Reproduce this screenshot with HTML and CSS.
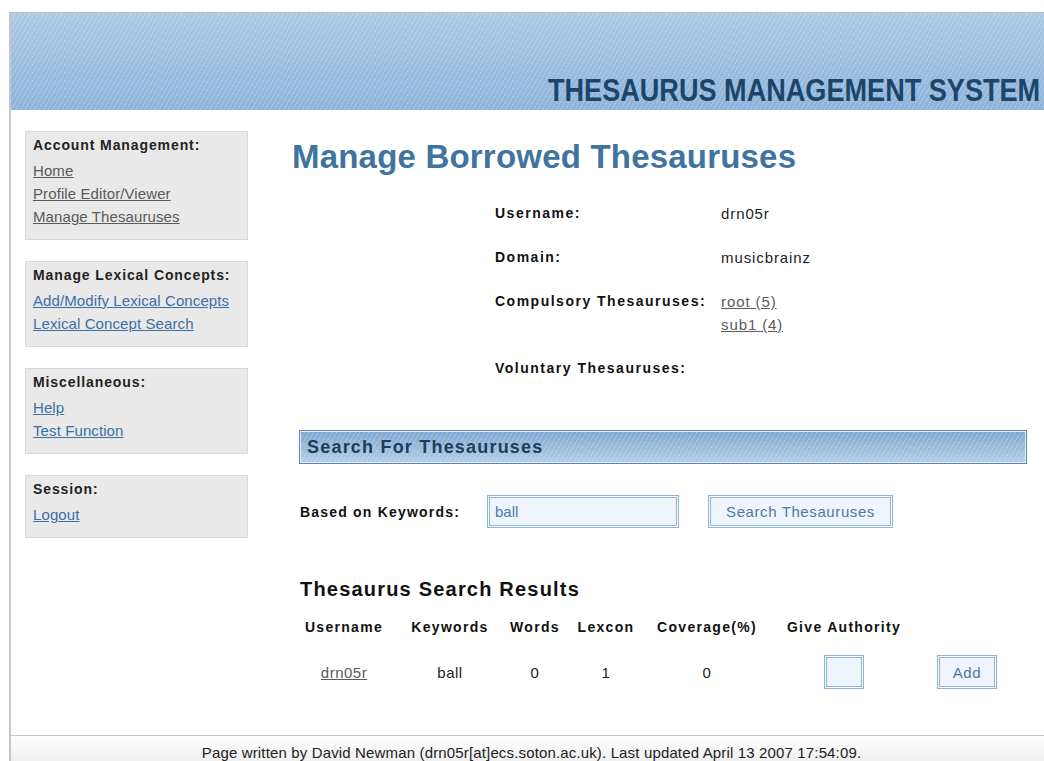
FILE: index.html
```html
<!DOCTYPE html>
<html lang="en">
<head>
<meta charset="utf-8">
<title>Manage Borrowed Thesauruses - Thesaurus Management System</title>
<link rel="stylesheet" href="styles.css">
</head>
<body>
<div class="page">
  <header class="banner">
    <span class="brand">THESAURUS MANAGEMENT SYSTEM</span>
  </header>

  <div class="layout">
    <nav class="sidebar">
      <div class="navbox">
        <h3>Account Management:</h3>
        <ul>
          <li><a href="#" class="seen">Home</a></li>
          <li><a href="#" class="seen">Profile Editor/Viewer</a></li>
          <li><a href="#" class="seen">Manage Thesauruses</a></li>
        </ul>
      </div>
      <div class="navbox">
        <h3>Manage Lexical Concepts:</h3>
        <ul>
          <li><a href="#">Add/Modify Lexical Concepts</a></li>
          <li><a href="#">Lexical Concept Search</a></li>
        </ul>
      </div>
      <div class="navbox">
        <h3>Miscellaneous:</h3>
        <ul>
          <li><a href="#">Help</a></li>
          <li><a href="#">Test Function</a></li>
        </ul>
      </div>
      <div class="navbox">
        <h3>Session:</h3>
        <ul>
          <li><a href="#">Logout</a></li>
        </ul>
      </div>
    </nav>

    <main class="content">
      <h1 class="page-title">Manage Borrowed Thesauruses</h1>

      <dl class="profile">
        <dt>Username:</dt>
        <dd>drn05r</dd>
        <dt>Domain:</dt>
        <dd>musicbrainz</dd>
        <dt>Compulsory Thesauruses:</dt>
        <dd>
          <a href="#" class="seen">root (5)</a><br>
          <a href="#" class="seen">sub1 (4)</a>
        </dd>
        <dt>Voluntary Thesauruses:</dt>
        <dd></dd>
      </dl>

      <h2 class="section-bar">Search For Thesauruses</h2>

      <form class="search-row">
        <label class="search-label" for="kw">Based on Keywords:</label>
        <input id="kw" class="field keyword-field" type="text" value="ball">
        <button type="button" class="btn search-btn">Search Thesauruses</button>
      </form>

      <h2 class="results-title">Thesaurus Search Results</h2>

      <div class="results">
        <div class="th">Username</div>
        <div class="th">Keywords</div>
        <div class="th">Words</div>
        <div class="th">Lexcon</div>
        <div class="th">Coverage(%)</div>
        <div class="th">Give Authority</div>
        <div class="th"></div>

        <div class="td"><a href="#" class="seen">drn05r</a></div>
        <div class="td">ball</div>
        <div class="td">0</div>
        <div class="td">1</div>
        <div class="td">0</div>
        <div class="td"><input class="field authority-field" type="text"></div>
        <div class="td"><button type="button" class="btn add-btn">Add</button></div>
      </div>
    </main>
  </div>

  <footer class="footer">
    Page written by David Newman (drn05r[at]ecs.soton.ac.uk). Last updated April 13 2007 17:54:09.
  </footer>
</div>
</body>
</html>
```

FILE: styles.css
```css
html, body {
  margin: 0;
  padding: 0;
  background: #ffffff;
  overflow: hidden;
}

body {
  font-family: "Liberation Sans", Arial, Helvetica, sans-serif;
  font-size: 15px;
  color: #222;
}

/* outer frame of the site */
.page {
  margin: 12px 0 0 9px;
  border-left: 2px solid #c6c6c6;
  border-top: 1px solid #bcbcbc;
  width: 1033px;
}

/* striped blue banner */
.banner {
  height: 97px;
  display: flex;
  align-items: flex-end;
  justify-content: flex-end;
  padding: 0 4px 4px 0;
  box-sizing: border-box;
  background:
    repeating-linear-gradient(120deg, rgba(255,255,255,0.2) 0 1px, rgba(255,255,255,0) 1px 4px),
    linear-gradient(#aac9e6, #8cb3da);
}

/* condensed wordmark */
.brand {
  display: inline-block;
  font-weight: bold;
  font-size: 31px;
  line-height: 31px;
  color: #1d4569;
  white-space: nowrap;
  transform: scaleX(0.874);
  transform-origin: right bottom;
}

.layout {
  display: flex;
  height: 625px;
}

/* left navigation */
.sidebar {
  width: 223px;
  padding: 21px 0 0 14px;
  flex: none;
}

.navbox {
  background: #e9e9e9;
  border: 1px solid #d9d9d9;
  padding: 3px 7px 11px;
  margin-bottom: 21px;
}

.navbox h3 {
  margin: 0 0 4px;
  font-size: 14px;
  line-height: 20px;
  letter-spacing: 0.9px;
  color: #222;
}

.navbox ul {
  list-style: none;
  margin: 0;
  padding: 0;
}

.navbox li {
  line-height: 23px;
  letter-spacing: 0.1px;
}

a {
  color: #3b6fa5;
  text-decoration: underline;
}

a.seen {
  color: #5a5a5a;
}

/* main column */
.content {
  margin-left: 44px;
  flex: 1;
  padding-right: 17px;
}

.page-title {
  margin: 27px 0 0;
  font-size: 33px;
  line-height: 40px;
  color: #41739f;
  font-weight: bold;
  letter-spacing: 0.2px;
}

.profile {
  display: grid;
  grid-template-columns: 226px auto;
  row-gap: 21px;
  margin: 25px 0 0 203px;
  line-height: 23px;
}

.profile dt {
  font-weight: bold;
  font-size: 14px;
  letter-spacing: 1.5px;
  color: #111;
}

.profile dd {
  margin: 0;
  letter-spacing: 0.9px;
}

.section-bar {
  margin: 50px 0 0 7px;
  height: 34px;
  box-sizing: border-box;
  border: 1px solid #5b88b6;
  box-shadow: inset 0 0 0 1px #e4edf7;
  padding: 0 7px;
  font-size: 18px;
  line-height: 32px;
  letter-spacing: 1.2px;
  color: #1c3d5c;
  background:
    repeating-linear-gradient(120deg, rgba(255,255,255,0.2) 0 1px, rgba(255,255,255,0) 1px 4px),
    linear-gradient(#7ea6cf, #b3cee8);
}

/* keyword search form */
.search-row {
  display: flex;
  align-items: center;
  margin: 31px 0 0 8px;
}

.search-label {
  width: 187px;
  font-weight: bold;
  font-size: 14px;
  letter-spacing: 1.2px;
  color: #111;
}

.field,
.btn {
  box-sizing: border-box;
  height: 33px;
  border: 1px solid #8db3da;
  box-shadow: inset 0 0 0 1px #ffffff, inset 0 0 0 2px #8db3da;
  background: #eef5fc;
  font-family: "Liberation Sans", Arial, sans-serif;
  font-size: 15px;
  color: #4c78a6;
  outline: none;
}

.keyword-field {
  width: 192px;
  padding: 0 7px;
}

.btn {
  padding: 0;
  letter-spacing: 0.6px;
  cursor: pointer;
}

.search-btn {
  width: 185px;
  margin-left: 29px;
}

.results-title {
  margin: 49px 0 0 8px;
  font-size: 20px;
  line-height: 24px;
  letter-spacing: 1.2px;
  color: #111;
}

/* search results table */
.results {
  display: grid;
  grid-template-columns: 106px 106px 64px 78px 124px 150px 96px;
  row-gap: 16px;
  align-items: center;
  justify-items: center;
  margin: 15px 0 0 -1px;
}

.th {
  font-weight: bold;
  font-size: 14px;
  line-height: 23px;
  letter-spacing: 1.3px;
  color: #111;
  white-space: nowrap;
}

.td {
  height: 34px;
  display: flex;
  align-items: center;
  letter-spacing: 0.5px;
}

.authority-field {
  width: 40px;
  height: 34px;
}

.add-btn {
  width: 60px;
  height: 34px;
}

/* page footer */
.footer {
  border-top: 1px solid #c6c6c6;
  background: linear-gradient(#ffffff, #ececec);
  text-align: center;
  font-size: 15px;
  line-height: 18px;
  letter-spacing: 0.15px;
  padding: 8px 0 4px 8px;
  color: #222;
}
```
